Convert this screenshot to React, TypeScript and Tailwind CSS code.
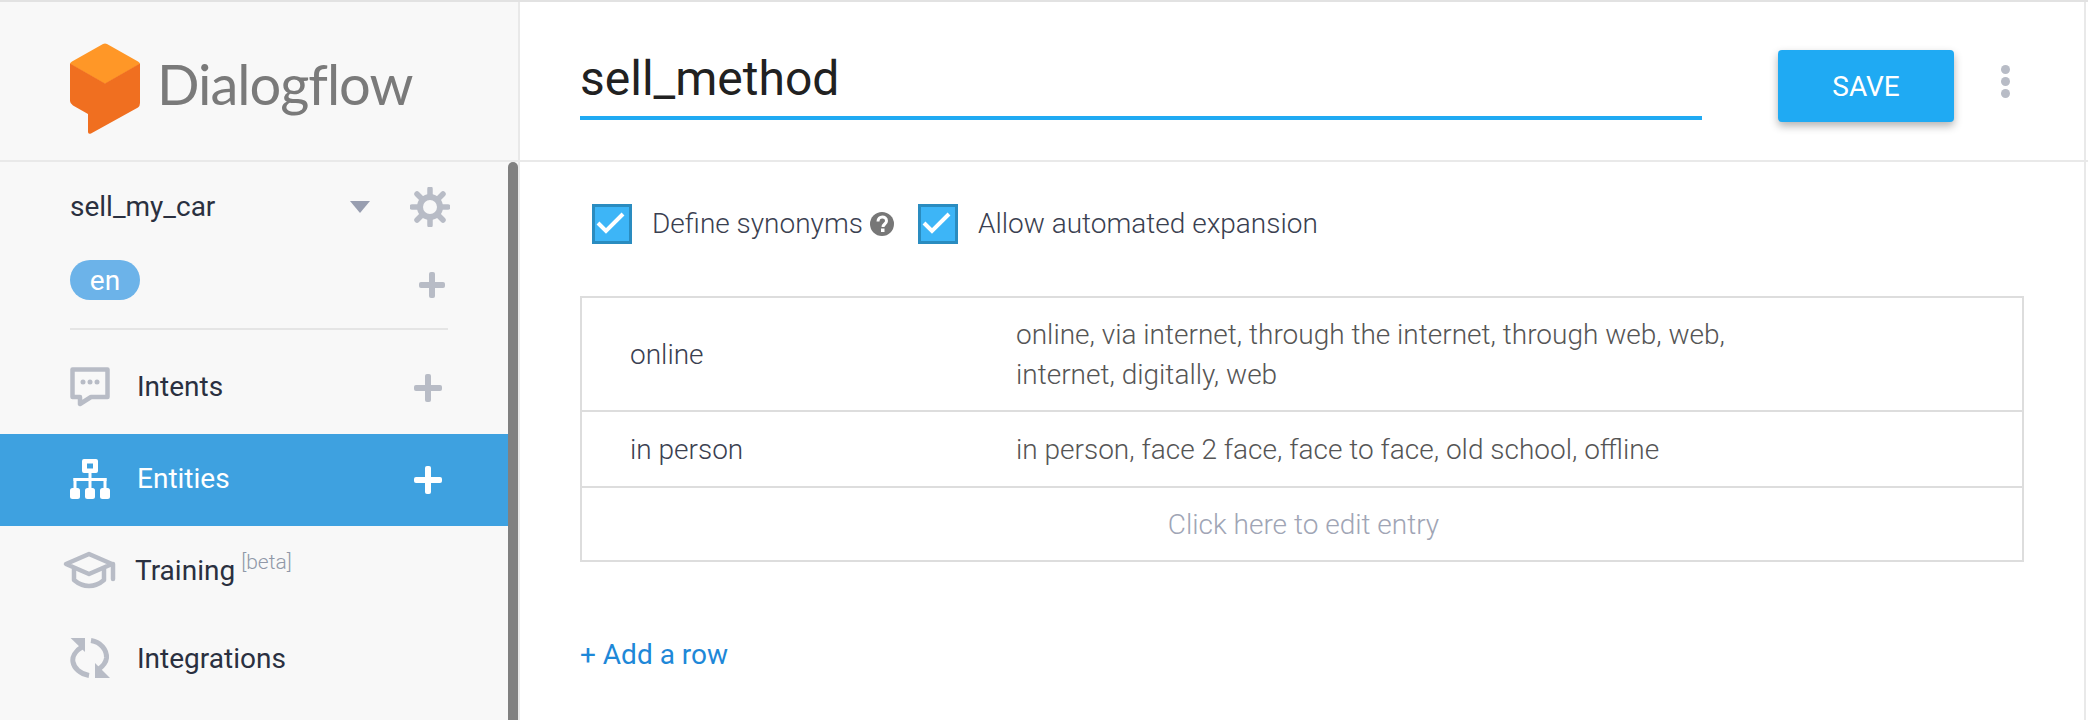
import React from "react";

function Plus({ className = "text-[#b8bcc6]" }: { className?: string }) {
  return (
    <svg viewBox="0 0 28 28" className={`w-7 h-7 ${className}`} fill="currentColor">
      <rect x="0" y="11" width="28" height="6" rx="2" />
      <rect x="11" y="0" width="6" height="28" rx="2" />
    </svg>
  );
}

function Logo() {
  return (
    <svg viewBox="0 0 70 91" className="w-[70px] h-[91px] mt-[14px]">
      <path d="M33 1 Q35 0 37 1 L68 18.5 Q70 19.5 70 21 L35 41 L0 21 Q0 19.5 2 18.5 Z" fill="#ff9727" />
      <path d="M0 20.5 L35 40.5 L70 20.5 V60 Q70 63 68 64.5 L21 90.5 Q18 91.5 18 89 V71 L3 62.5 Q0 60.5 0 58 Z" fill="#f06f20" />
    </svg>
  );
}

function Check() {
  return (
    <span className="flex items-center justify-center w-10 h-10 border-[3px] border-[#2a8cc0] bg-[#3db5f7]">
      <svg viewBox="0 0 34 34" className="w-[34px] h-[34px]" fill="none" stroke="#fff" strokeWidth="4">
        <path d="M3 16 L11 24 L28 7" />
      </svg>
    </span>
  );
}

function NavRow({ icon, label, plus, active }: { icon: React.ReactNode; label: React.ReactNode; plus?: boolean; active?: boolean }) {
  return (
    <div className={`flex items-center h-[92px] pl-[70px] pr-[66px] ${active ? "bg-[#3ea1e0] text-white" : "text-[#2a3040]"}`}>
      <span className="w-10 flex justify-center mb-[3px]">{icon}</span>
      <span className="ml-[27px] flex-1 text-[28px] mb-[3px]">{label}</span>
      {plus && <Plus className={active ? "text-white" : "text-[#b8bcc6]"} />}
    </div>
  );
}

export default function App() {
  return (
    <div className="flex flex-col w-[2088px] h-[720px] overflow-hidden bg-white font-['Roboto',sans-serif] border-t-2 border-[#e2e2e2]">
      <div className="flex h-[160px] border-b-2 border-[#e9e9e9]">
        <div className="flex items-center shrink-0 w-[520px] pl-[70px] bg-[#f8f8f8] border-r-2 border-[#e9e9e9]">
          <Logo />
          <span className="ml-[17px] mt-[6px] text-[56px] tracking-[-1px] text-[#7a7a7a] font-['Lato',sans-serif]">Dialogflow</span>
        </div>
        <div className="flex flex-1 items-start pl-[60px] border-r-2 border-[#e9e9e9] mr-[2px]">
          <div className="w-[1122px] h-[118px] pt-[46px] border-b-[4px] border-[#1faaf3] text-[48px] leading-[62px] text-[#212121]">sell_method</div>
          <button className="ml-[76px] mt-[48px] pt-[2px] w-[176px] h-[72px] rounded-[4px] bg-[#1faaf3] text-white text-[28px] shadow-[0_4px_8px_rgba(0,0,0,0.3)]">SAVE</button>
          <div className="flex flex-col gap-[3px] ml-[47px] mt-[63px]">
            <span className="w-[9px] h-[9px] rounded-full bg-[#b8bcc6]" />
            <span className="w-[9px] h-[9px] rounded-full bg-[#b8bcc6]" />
            <span className="w-[9px] h-[9px] rounded-full bg-[#b8bcc6]" />
          </div>
        </div>
      </div>
      <div className="flex flex-1 min-h-0">
        <div className="flex shrink-0 w-[520px] bg-[#f8f8f8] border-r-2 border-[#e9e9e9]">
          <div className="flex-1 flex flex-col">
            <div className="flex items-center h-[90px] pl-[70px] pr-[58px] text-[28px] text-[#2a3040]">
              <span className="flex-1">sell_my_car</span>
              <svg viewBox="0 0 20 12" className="w-5 h-3 mr-10 text-[#989eb0]" fill="currentColor"><path d="M0 0 H20 L10 12 Z" /></svg>
              <svg viewBox="0 0 40 40" className="w-10 h-10 text-[#b8bcc6]" fill="none" stroke="currentColor">
                <circle cx="20" cy="20" r="10" strokeWidth="6" />
                <path d="M20 2 V8 M20 32 V38 M2 20 H8 M32 20 H38 M7 7 L11.5 11.5 M28.5 28.5 L33 33 M7 33 L11.5 28.5 M28.5 11.5 L33 7" strokeWidth="5.5" strokeLinecap="round" />
              </svg>
            </div>
            <div className="flex items-center h-[56px] pl-[70px] pr-[63px]">
              <span className="flex items-center justify-center w-[70px] h-10 pt-[2px] rounded-full bg-[#6cb3e9] text-white text-[28px]">en</span>
              <span className="ml-auto mt-[9px]">
                <svg viewBox="0 0 26 26" className="w-[26px] h-[26px] text-[#b8bcc6]" fill="currentColor">
                  <rect x="0" y="10" width="26" height="6" rx="2" /><rect x="10" y="0" width="6" height="26" rx="2" />
                </svg>
              </span>
            </div>
            <div className="h-[2px] mt-[20px] mb-[12px] ml-[70px] mr-[60px] bg-[#e5e5e5]" />
            <NavRow
              label="Intents"
              plus
              icon={
                <svg viewBox="0 0 40 40" className="w-10 h-10 text-[#b8bcc6]" fill="none" stroke="currentColor" strokeWidth="4.5">
                  <path d="M2.5 2.5 H37.5 V30 H21 L10 37 V30 H2.5 Z" strokeLinejoin="round" />
                  <circle cx="13" cy="15" r="2.5" fill="currentColor" stroke="none" />
                  <circle cx="20" cy="15" r="2.5" fill="currentColor" stroke="none" />
                  <circle cx="27" cy="15" r="2.5" fill="currentColor" stroke="none" />
                </svg>
              }
            />
            <NavRow
              active
              label="Entities"
              plus
              icon={
                <svg viewBox="0 0 40 40" className="w-10 h-10" fill="#fff">
                  <path fillRule="evenodd" d="M12 2 Q12 0 14 0 H26 Q28 0 28 2 V12 Q28 14 26 14 H14 Q12 14 12 12 Z M17 4.5 V9.5 H23 V4.5 Z" />
                  <rect x="18.5" y="13" width="3" height="17" />
                  <rect x="3.5" y="19" width="33" height="3" />
                  <rect x="3.5" y="19" width="3" height="11" />
                  <rect x="33.5" y="19" width="3" height="11" />
                  <rect x="0" y="29" width="10" height="11" rx="2.5" />
                  <rect x="15" y="29" width="10" height="11" rx="2.5" />
                  <rect x="30" y="29" width="10" height="11" rx="2.5" />
                </svg>
              }
            />
            <div className="flex items-center h-[88px] pl-[63px] text-[#2a3040]">
              <svg viewBox="0 0 53 38" className="w-[53px] h-[38px] text-[#b8bcc6]" fill="none" stroke="currentColor" strokeWidth="4.5" strokeLinejoin="round">
                <path d="M26 3 L49 13 L26 23 L3 13 Z" />
                <path d="M11 18 V29 Q18 35 26 35 Q34 35 41 29 V18" />
                <path d="M50 13 V28" strokeLinecap="round" />
              </svg>
              <span className="ml-[19px] mt-[1px] text-[28px]">Training</span>
              <span className="ml-[6px] mb-[14px] text-[21px] font-light text-[#9098a8]">[beta]</span>
            </div>
            <div className="flex items-center h-[88px] pl-[70px] text-[#2a3040]">
              <svg viewBox="0 0 40 40" className="w-10 h-10 text-[#b8bcc6]" fill="none" stroke="currentColor" strokeWidth="5">
                <path d="M12 9 C5 13 2 19 3 24 C4 30 10 36 19 37.5" />
                <path d="M21 2.5 C31 4 37 12 36.5 20 C36 24 33 28 29 31" />
                <path d="M0.6 0 H15 V14 Z" fill="currentColor" stroke="none" />
                <path d="M25 25 V40 H40 Z" fill="currentColor" stroke="none" />
              </svg>
              <span className="ml-[27px] mt-[1px] text-[28px]">Integrations</span>
            </div>
          </div>
          <div className="w-[10px] bg-[#808080] rounded-t-[6px]" />
        </div>
        <div className="flex-1 pl-[60px] mr-[2px] border-r-2 border-[#e9e9e9]">
          <div className="flex items-center h-[40px] mt-[42px] ml-[12px] text-[28px] font-light text-[#3a4050]">
            <Check />
            <span className="ml-[20px]">Define synonyms</span>
            <svg viewBox="0 0 24 24" className="w-6 h-6 ml-[7px]">
              <circle cx="12" cy="12" r="12" fill="#777" />
              <path d="M8 9.5 C8 3.5 16.5 3.5 16.5 9 C16.5 12 13 12 13 15" fill="none" stroke="#fff" strokeWidth="3" />
              <rect x="11" y="16.5" width="3.5" height="3.5" fill="#fff" />
            </svg>
            <span className="ml-6"><Check /></span>
            <span className="ml-5">Allow automated expansion</span>
          </div>
          <div className="w-[1444px] mt-[52px] border-2 border-[#dddddd] text-[28px] font-light">
            <div className="flex items-center h-[114px] pt-[2px] border-b-2 border-[#dddddd]">
              <span className="w-[434px] pl-[48px] text-[#3a4050]">online</span>
              <span className="w-[760px] leading-10 text-[#555]">online, via internet, through the internet, through web, web, internet, digitally, web</span>
            </div>
            <div className="flex items-center h-[76px] pt-[2px] border-b-2 border-[#dddddd]">
              <span className="w-[434px] pl-[48px] text-[#3a4050]">in person</span>
              <span className="text-[#555]">in person, face 2 face, face to face, old school, offline</span>
            </div>
            <div className="flex items-center justify-center h-[72px] pt-[2px] pl-[3px] text-[#a0a5b5]">Click here to edit entry</div>
          </div>
          <div className="mt-[72px] text-[28px] text-[#1e88d8] font-normal">+ Add a row</div>
        </div>
      </div>
    </div>
  );
}
